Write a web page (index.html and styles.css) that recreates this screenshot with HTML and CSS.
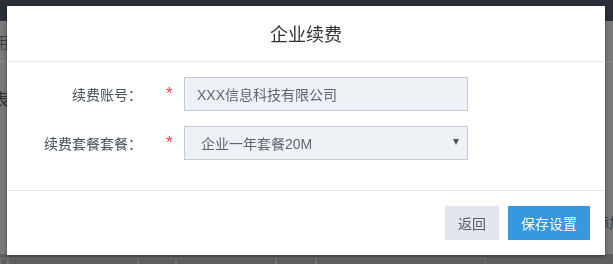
FILE: index.html
```html
<!DOCTYPE html>
<html lang="zh-CN">
<head>
<meta charset="utf-8">
<title>企业续费</title>
<link rel="stylesheet" href="styles.css">
</head>
<body>
<div class="page">
  <div class="topbar"></div>
  <div class="toolbar"><span class="crumb">用户管理</span></div>
  <div class="content">
    <div class="content-title">表单列表<span class="add">添加</span></div>
    <div class="table-foot">
      <span class="cell c1"></span><span class="cell c2"></span><span class="cell c3"></span><span class="cell c4"></span><span class="cell c5"></span><span class="cell c6"></span>
    </div>
  </div>
</div>

<div class="mask">
  <div class="dialog">
    <div class="dialog-header">企业续费</div>
    <div class="dialog-body">
      <div class="form-row">
        <label class="form-label">续费账号：</label>
        <span class="required">*</span>
        <div class="input">XXX信息科技有限公司</div>
      </div>
      <div class="form-row">
        <label class="form-label">续费套餐套餐：</label>
        <span class="required">*</span>
        <div class="input select">
          <span>企业一年套餐20M</span>
          <span class="caret"></span>
        </div>
      </div>
    </div>
    <div class="dialog-footer">
      <button class="btn btn-default">返回</button>
      <button class="btn btn-primary">保存设置</button>
    </div>
  </div>
</div>
</body>
</html>
```

FILE: styles.css
```css
* { box-sizing: border-box; }
html, body {
  margin: 0;
  padding: 0;
  width: 613px;
  height: 264px;
  overflow: hidden;
}
body {
  font-family: "Liberation Sans", "Noto Sans CJK SC", sans-serif;
  background: #7d7d7d;
}
.page {
  display: flex;
  flex-direction: column;
  height: 264px;
}
.topbar {
  height: 21px;
  background: #2b2f37;
  flex: none;
}
.toolbar {
  height: 41px;
  border-bottom: 1px solid #8a8a8a;
  display: flex;
  align-items: center;
  flex: none;
  background: #7a7a7a;
}
.crumb {
  font-size: 15px;
  color: #3f3f3f;
  margin-left: -6px;
  font-family: "Noto Sans CJK SC", sans-serif;
}
.content {
  flex: 1;
  display: flex;
  flex-direction: column;
  justify-content: space-between;
  background: #7b7b7b;
}
.content-title {
  font-size: 17px;
  color: #2e2e2e;
  margin-top: 24px;
  margin-left: -8px;
  display: flex;
  justify-content: space-between;
  font-family: "Noto Sans CJK SC", sans-serif;
}
.add {
  font-size: 14px;
  color: #3a3a3a;
  margin-top: 126px;
  margin-right: -10px;
}
.table-foot {
  height: 10px;
  background: #5e5e5e;
  display: flex;
  padding-top: 4px;
}
.cell {
  height: 8px;
  border: 1px solid #6f6f78;
  border-bottom: none;
}
.c1 { width: 8px; }
.c2 { width: 130px; }
.c3 { width: 38px; }
.c4 { width: 100px; }
.c5 { width: 40px; }
.c6 { width: 170px; }

.mask {
  position: fixed;
  inset: 0;
}
.dialog {
  position: absolute;
  top: 6px;
  left: 7px;
  width: 598px;
  height: 249px;
  background: #fff;
  box-shadow: 0 1px 4px rgba(0, 0, 0, 0.45);
  display: flex;
  flex-direction: column;
}
.dialog-header {
  height: 56px;
  flex: none;
  border-bottom: 1px solid #e6e6e6;
  display: flex;
  align-items: center;
  justify-content: center;
  font-size: 18px;
  color: #333;
  font-family: "Noto Sans CJK SC", sans-serif;
  padding-bottom: 1px;
}
.dialog-body {
  height: 129px;
  flex: none;
  border-bottom: 1px solid #e6e6e6;
  padding-top: 15px;
  display: flex;
  flex-direction: column;
  gap: 15px;
}
.form-row {
  display: flex;
  align-items: center;
  height: 34px;
}
.form-label {
  width: 135px;
  text-align: right;
  font-size: 14px;
  color: #48505c;
  font-family: "Noto Sans CJK SC", sans-serif;
}
.required {
  width: 42px;
  padding-left: 24px;
  color: #ff3b4e;
  font-size: 17px;
  align-self: flex-start;
  padding-top: 8px;
  line-height: 1;
}
.input {
  width: 284px;
  height: 34px;
  background: #eef1f6;
  border: 1px solid #c3cbd9;
  display: flex;
  align-items: center;
  padding-left: 12px;
  font-size: 14px;
  color: #5f6670;
}
.select {
  padding-left: 16px;
  padding-right: 8px;
  justify-content: space-between;
}
.caret {
  width: 0;
  height: 0;
  border-left: 3.5px solid transparent;
  border-right: 3.5px solid transparent;
  border-top: 6px solid #555;
  margin-top: -2px;
}
.dialog-footer {
  flex: 1;
  display: flex;
  justify-content: flex-end;
  align-items: flex-start;
  padding-top: 15px;
  padding-right: 15px;
  gap: 9px;
}
.btn {
  height: 34px;
  border: none;
  font-size: 14px;
  font-family: "Noto Sans CJK SC", sans-serif;
  padding: 0;
  cursor: pointer;
}
.btn-default {
  width: 54px;
  background: #e2e6ee;
  color: #5c5c5c;
}
.btn-primary {
  width: 82px;
  background: #3798dd;
  color: #fff;
}
```
